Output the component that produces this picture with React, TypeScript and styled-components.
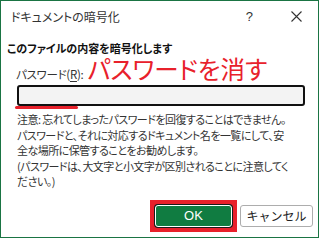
import React from "react";
import styled, { createGlobalStyle } from "styled-components";

const GlobalStyle = createGlobalStyle`
  html, body {
    margin: 0;
    padding: 0;
    background: #ffffff;
  }
  body {
    font-family: "Noto Sans CJK JP", "Noto Sans", sans-serif;
    font-feature-settings: "palt";
    color: #1a1a1a;
  }
`;

const noteLines = [
  "注意: 忘れてしまったパスワードを回復することはできません。",
  "パスワードと、それに対応するドキュメント名を一覧にして、安",
  "全な場所に保管することをお勧めします。",
  "(パスワードは、大文字と小文字が区別されることに注意してく",
  "ださい。)",
];

const App = () => {
  return (
    <>
      <GlobalStyle />
      <Window>
        <TitleBar>
          <Title>ドキュメントの暗号化</Title>
          <TitleButtons>
            <HelpMark>?</HelpMark>
            <CloseIcon width="11" height="11" viewBox="0 0 11 11">
              <path d="M0.5 0.5 L10.5 10.5 M10.5 0.5 L0.5 10.5" stroke="#333" strokeWidth="1.1" />
            </CloseIcon>
          </TitleButtons>
        </TitleBar>

        <Content>
          <Heading>このファイルの内容を暗号化します</Heading>

          <LabelRow>
            <Label>
              パスワード(<u>R</u>):
            </Label>
            <Annotation>パスワードを消す</Annotation>
          </LabelRow>

          <PasswordInput type="password" />
          <Underline />

          <Note>
            {noteLines.map((line) => (
              <NoteLine key={line}>{line}</NoteLine>
            ))}
          </Note>

          <ButtonRow>
            <Highlight>
              <Button $primary>OK</Button>
            </Highlight>
            <Button>キャンセル</Button>
          </ButtonRow>
        </Content>
      </Window>
    </>
  );
};

const Window = styled.div`
  width: 319px;
  height: 238px;
  box-sizing: border-box;
  border: 1px solid #1a7443;
  display: flex;
  flex-direction: column;
  background: #ffffff;
  overflow: hidden;
`;

const TitleBar = styled.div`
  height: 31px;
  flex-shrink: 0;
  display: flex;
  align-items: center;
  justify-content: space-between;
  padding: 0 16px 0 10px;
`;

const Title = styled.span`
  font-size: 12px;
  color: #333333;
`;

const TitleButtons = styled.div`
  display: flex;
  align-items: center;
  gap: 38px;
`;

const HelpMark = styled.span`
  font-family: "Liberation Sans", sans-serif;
  font-size: 13px;
  color: #333333;
`;

const CloseIcon = styled.svg`
  display: block;
`;

const Content = styled.div`
  display: flex;
  flex-direction: column;
  padding: 0 13px 0 6px;
`;

const Heading = styled.div`
  margin-top: 8px;
  font-size: 11px;
  font-weight: bold;
  line-height: 16px;
  color: #111111;
`;

const LabelRow = styled.div`
  display: flex;
  align-items: center;
  height: 30px;
  padding-left: 9px;
  gap: 4px;
`;

const Label = styled.span`
  font-size: 11.5px;
  letter-spacing: -0.3px;
  color: #333333;
  padding-top: 5px;

  u {
    text-underline-offset: 2px;
  }
`;

const Annotation = styled.span`
  font-size: 24.5px;
  color: #e8212b;
  line-height: 1;
  font-weight: 400;
  margin-top: -3px;
`;

const PasswordInput = styled.input`
  margin: -1px 0 0 10px;
  width: 288px;
  height: 21px;
  box-sizing: border-box;
  border: 2px solid #111111;
  border-radius: 3px;
  background: #f3f3f3;
  outline: none;
`;

const Underline = styled.div`
  margin: 0 0 0 8px;
  width: 63px;
  height: 3px;
  border-radius: 2px;
  background: #e8212b;
`;

const Note = styled.div`
  margin-top: 3px;
  padding-left: 10px;
  font-size: 11px;
  letter-spacing: -0.55px;
  line-height: 15.5px;
  color: #333333;
`;

const NoteLine = styled.div`
  white-space: nowrap;
`;

const ButtonRow = styled.div`
  display: flex;
  justify-content: flex-end;
  align-items: center;
  gap: 3px;
  margin-top: 10px;
  margin-right: -8px;
`;

const Highlight = styled.div`
  border: 5px solid #e8212b;
  padding: 0;
  display: flex;
`;

const Button = styled.button<{ $primary?: boolean }>`
  width: ${(p) => (p.$primary ? "77px" : "73px")};
  height: 22px;
  box-sizing: border-box;
  border-radius: 3px;
  font-family: ${(p) =>
    p.$primary ? '"Liberation Sans", sans-serif' : '"Noto Sans CJK JP", sans-serif'};
  font-size: ${(p) => (p.$primary ? "13px" : "12px")};
  line-height: 1;
  padding: 0;
  color: ${(p) => (p.$primary ? "#ffffff" : "#222222")};
  background: ${(p) => (p.$primary ? "#107c41" : "#ffffff")};
  border: 1px solid ${(p) => (p.$primary ? "#ffffff" : "#adadad")};
  box-shadow: ${(p) => (p.$primary ? "0 0 0 1px #1b1b1b" : "none")};
`;

export default App;
